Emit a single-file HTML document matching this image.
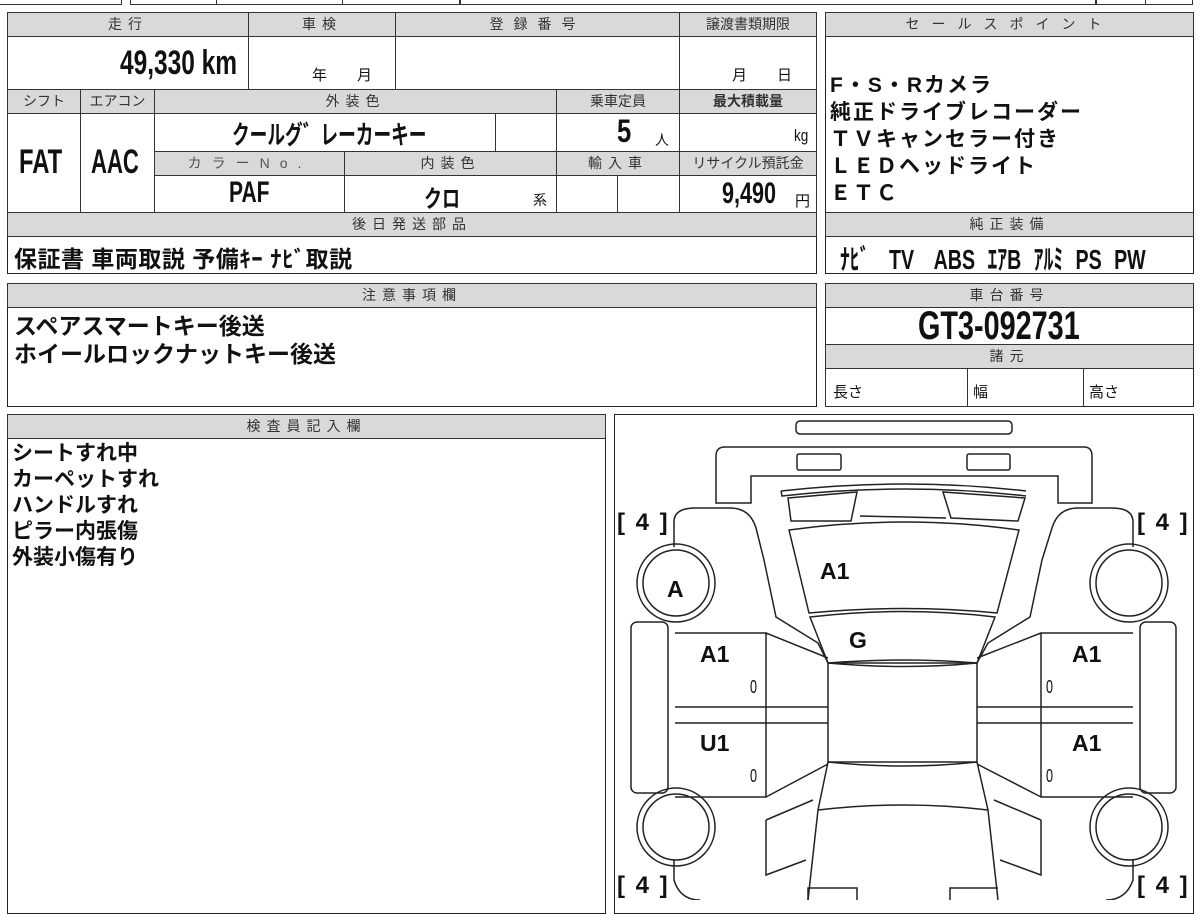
<!DOCTYPE html>
<html><head><meta charset="utf-8"><style>
body{margin:0;width:1200px;height:900px;background:#fff;position:relative;overflow:hidden;font-family:"Liberation Sans","Noto Sans CJK JP",sans-serif;color:#111}
.b{position:absolute;border:1.5px solid #222;box-sizing:border-box}
.h{position:absolute;background:#d9d9d9;border:1px solid #333;box-sizing:border-box;font-size:14px;text-align:center;line-height:22px;letter-spacing:6px;color:#333}
.c{position:absolute;border:1px solid #333;box-sizing:border-box}
.t{position:absolute;white-space:nowrap}
.bold{font-weight:bold}
.br{position:absolute;white-space:nowrap;font-size:24px;font-weight:bold;word-spacing:4px}
</style></head><body>
<div class="c" style="left:-2px;top:-10px;width:124px;height:15px;border-width:1.5px"></div>
<div class="c" style="left:130px;top:-10px;width:330px;height:15px;border-width:1.5px"></div>
<div class="c" style="left:216px;top:-10px;width:127px;height:15px"></div>
<div class="c" style="left:460px;top:-10px;width:636px;height:15px;border-width:1.5px"></div>
<div class="c" style="left:1096px;top:-10px;width:97px;height:15px;border-width:1.5px"></div>
<div class="c" style="left:1145px;top:-10px;width:48px;height:15px"></div>

<div class="b" style="left:7px;top:12px;width:810px;height:262px"></div>
<div class="h" style="left:7px;top:12px;width:242px;height:25px">走行</div>
<div class="h" style="left:248px;top:12px;width:148px;height:25px">車検</div>
<div class="h" style="left:395px;top:12px;width:285px;height:25px;letter-spacing:10px">登録番号</div>
<div class="h" style="left:679px;top:12px;width:138px;height:25px;letter-spacing:0">譲渡書類期限</div>
<div class="c" style="left:7px;top:36px;width:242px;height:54px"></div>
<div class="t bold" style="left:120px;top:44px;font-size:34px;transform:scaleX(.72);transform-origin:left top">49,330 km</div>
<div class="c" style="left:248px;top:36px;width:148px;height:54px"></div>
<div class="t" style="left:312px;top:64px;font-size:15px">年　　月</div>
<div class="c" style="left:395px;top:36px;width:285px;height:54px"></div>
<div class="c" style="left:679px;top:36px;width:138px;height:54px"></div>
<div class="t" style="left:732px;top:64px;font-size:15px">月　　日</div>

<div class="h" style="left:7px;top:89px;width:74px;height:25px;letter-spacing:0">シフト</div>
<div class="h" style="left:80px;top:89px;width:75px;height:25px;letter-spacing:0">エアコン</div>
<div class="h" style="left:154px;top:89px;width:403px;height:25px">外装色</div>
<div class="h" style="left:556px;top:89px;width:124px;height:25px;letter-spacing:0">乗車定員</div>
<div class="h" style="left:679px;top:89px;width:138px;height:25px;letter-spacing:0;font-weight:bold">最大積載量</div>
<div class="c" style="left:7px;top:113px;width:74px;height:100px"></div>
<div class="c" style="left:80px;top:113px;width:75px;height:100px"></div>
<div class="t bold" style="left:19px;top:143px;font-size:34px;transform:scaleX(.7);transform-origin:left top">FAT</div>
<div class="t bold" style="left:91px;top:143px;font-size:34px;transform:scaleX(.65);transform-origin:left top">AAC</div>
<div class="c" style="left:154px;top:113px;width:342px;height:39px"></div>
<div class="t bold" style="left:232px;top:115px;font-size:26px;transform:scaleX(.68);transform-origin:left top">クールグ゛レーカーキー</div>
<div class="c" style="left:495px;top:113px;width:62px;height:39px"></div>
<div class="c" style="left:556px;top:113px;width:124px;height:39px"></div>
<div class="t bold" style="left:617px;top:113px;font-size:32px;transform:scaleX(.8);transform-origin:left top">5</div>
<div class="t" style="left:655px;top:130px;font-size:14px">人</div>
<div class="c" style="left:679px;top:113px;width:138px;height:39px"></div>
<div class="t" style="left:794px;top:126px;font-size:17px;transform:scaleX(.8);transform-origin:left top">kg</div>
<div class="h" style="left:154px;top:151px;width:191px;height:25px;letter-spacing:10px;color:#555">カラーNo.</div>
<div class="h" style="left:344px;top:151px;width:213px;height:25px">内装色</div>
<div class="h" style="left:556px;top:151px;width:124px;height:25px">輸入車</div>
<div class="h" style="left:679px;top:151px;width:138px;height:25px;letter-spacing:0">リサイクル預託金</div>
<div class="c" style="left:154px;top:175px;width:191px;height:38px"></div>
<div class="t bold" style="left:229px;top:176px;font-size:30px;transform:scaleX(.7);transform-origin:left top">PAF</div>
<div class="c" style="left:344px;top:175px;width:213px;height:38px"></div>
<div class="t bold" style="left:424px;top:179px;font-size:24px;transform:scaleX(.75);transform-origin:left top">クロ</div>
<div class="t" style="left:533px;top:190px;font-size:14px">系</div>
<div class="c" style="left:556px;top:175px;width:62px;height:38px"></div>
<div class="c" style="left:617px;top:175px;width:63px;height:38px"></div>
<div class="c" style="left:679px;top:175px;width:138px;height:38px"></div>
<div class="t bold" style="left:722px;top:177px;font-size:30px;transform:scaleX(.72);transform-origin:left top">9,490</div>
<div class="t" style="left:795px;top:190px;font-size:15px">円</div>
<div class="h" style="left:7px;top:212px;width:810px;height:25px">後日発送部品</div>
<div class="t bold" style="left:14px;top:240px;font-size:23px;letter-spacing:0.5px">保証書 車両取説 予備ｷｰ ﾅﾋﾞ取説</div>

<div class="b" style="left:825px;top:12px;width:369px;height:262px"></div>
<div class="h" style="left:825px;top:12px;width:369px;height:25px;letter-spacing:12px">セールスポイント</div>
<div class="t bold" style="left:830px;top:72px;font-size:21px;line-height:27px;letter-spacing:2px">F・S・Rカメラ<br>純正ドライブレコーダー<br>ＴＶキャンセラー付き<br>ＬＥＤヘッドライト<br>ＥＴＣ</div>
<div class="h" style="left:825px;top:212px;width:369px;height:25px">純正装備</div>
<div class="t bold" style="left:840px;top:238px;font-size:28px;transform:scaleX(.7);transform-origin:left top;word-spacing:10px">ﾅﾋﾞ　TV　ABS ｴｱB ｱﾙﾐ PS PW</div>

<div class="b" style="left:7px;top:283px;width:810px;height:124px"></div>
<div class="h" style="left:7px;top:283px;width:810px;height:25px">注意事項欄</div>
<div class="t bold" style="left:14px;top:312px;font-size:23px;line-height:28px">スペアスマートキー後送<br>ホイールロックナットキー後送</div>

<div class="b" style="left:825px;top:283px;width:369px;height:124px"></div>
<div class="h" style="left:825px;top:283px;width:369px;height:25px">車台番号</div>
<div class="t bold" style="left:918px;top:304px;font-size:40px;transform:scaleX(.72);transform-origin:left top">GT3-092731</div>
<div class="h" style="left:825px;top:344px;width:369px;height:25px">諸元</div>
<div class="c" style="left:825px;top:368px;width:143px;height:39px"></div>
<div class="c" style="left:967px;top:368px;width:117px;height:39px"></div>
<div class="t" style="left:833px;top:381px;font-size:15px">長さ</div>
<div class="t" style="left:973px;top:381px;font-size:15px">幅</div>
<div class="t" style="left:1089px;top:381px;font-size:15px">高さ</div>

<div class="b" style="left:7px;top:414px;width:599px;height:500px"></div>
<div class="h" style="left:7px;top:414px;width:599px;height:25px">検査員記入欄</div>
<div class="t bold" style="left:12px;top:441px;font-size:21px;line-height:26px">シートすれ中<br>カーペットすれ<br>ハンドルすれ<br>ピラー内張傷<br>外装小傷有り</div>

<div class="b" style="left:614px;top:414px;width:580px;height:500px"></div>
<svg style="position:absolute;left:0;top:0" width="1200" height="900" fill="none" stroke="#222" stroke-width="1.5">
<rect x="796" y="421" width="216" height="13" rx="4"/>
<path d="M716 503 V456 Q716 447 725 447 H1084 Q1092 447 1092 456 V503 H1058 V476 H751 V503 Z"/>
<rect x="797" y="454" width="44" height="16" rx="2"/>
<rect x="967" y="454" width="43" height="16" rx="2"/>
<path d="M781 491 Q905 477 1026 491 M781 491 L782 496 Q905 482 1026 496"/>
<path d="M788 498 L857 492 L851 521 L791 521 Z M1025 498 L943 492 L951 518 L1018 521 Z M860 516 L946 518"/>
<path d="M789 530 Q905 514 1019 530 L997 613 Q905 604 809 613 Z"/>
<path d="M810 617 Q905 606 995 617 L977 663 Q905 657 828 663 Z"/>
<path d="M828 663 H977 V762 H828 Z"/>
<path d="M828 663 Q905 670 977 663 M828 762 Q905 770 977 762"/>
<path d="M674 547 V522 Q674 508 695 508 H730 Q750 508 756 528 L764 560 L776 617 L818 643 L828 663"/>
<path d="M1133 547 V522 Q1133 508 1112 508 H1078 Q1058 508 1052 528 L1042 560 L1030 617 L988 643 L977 663"/>
<circle cx="676" cy="583" r="39"/><circle cx="676" cy="583" r="33"/>
<circle cx="1129" cy="583" r="39"/><circle cx="1129" cy="583" r="33"/>
<circle cx="676" cy="827" r="39"/><circle cx="676" cy="827" r="33"/>
<circle cx="1129" cy="827" r="39"/><circle cx="1129" cy="827" r="33"/>
<rect x="631" y="622" width="37" height="171" rx="6"/>
<rect x="1140" y="622" width="36" height="171" rx="6"/>
<path d="M675 633 H766 V797 H675 M766 633 L828 658 M675 707 H828 M675 723 H828 M766 797 L828 764"/>
<path d="M1133 633 H1041 V797 H1133 M1041 633 L977 658 M1133 707 H977 M1133 723 H977 M1041 797 L977 764"/>
<path d="M828 762 L818 810 L808 900 M977 762 L988 810 L998 900 M818 810 Q905 800 988 810"/>
<path d="M766 820 L813 800 M766 820 V875 L806 860 M1041 820 L994 800 M1041 820 V875 L1000 860"/>
<path d="M674 860 V880 Q680 900 700 900 M1133 860 V880 Q1126 900 1106 900"/>
<path d="M808 900 V888 H857 V900 M950 900 V888 H998"/>
</svg>
<div class="br" style="left:617px;top:509px">[ 4 ]</div>
<div class="br" style="left:1137px;top:509px">[ 4 ]</div>
<div class="br" style="left:617px;top:872px">[ 4 ]</div>
<div class="br" style="left:1137px;top:872px">[ 4 ]</div>
<div class="t bold" style="left:820px;top:558px;font-size:23px">A1</div>
<div class="t bold" style="left:667px;top:576px;font-size:23px">A</div>
<div class="t bold" style="left:849px;top:627px;font-size:23px">G</div>
<div class="t bold" style="left:700px;top:641px;font-size:23px">A1</div>
<div class="t bold" style="left:700px;top:730px;font-size:23px">U1</div>
<div class="t bold" style="left:1072px;top:641px;font-size:23px">A1</div>
<div class="t bold" style="left:1072px;top:730px;font-size:23px">A1</div>
<div class="t" style="left:750px;top:677px;font-size:18px;transform:scaleX(.7);transform-origin:left top">0</div>
<div class="t" style="left:750px;top:766px;font-size:18px;transform:scaleX(.7);transform-origin:left top">0</div>
<div class="t" style="left:1046px;top:677px;font-size:18px;transform:scaleX(.7);transform-origin:left top">0</div>
<div class="t" style="left:1046px;top:766px;font-size:18px;transform:scaleX(.7);transform-origin:left top">0</div>
</body></html>
